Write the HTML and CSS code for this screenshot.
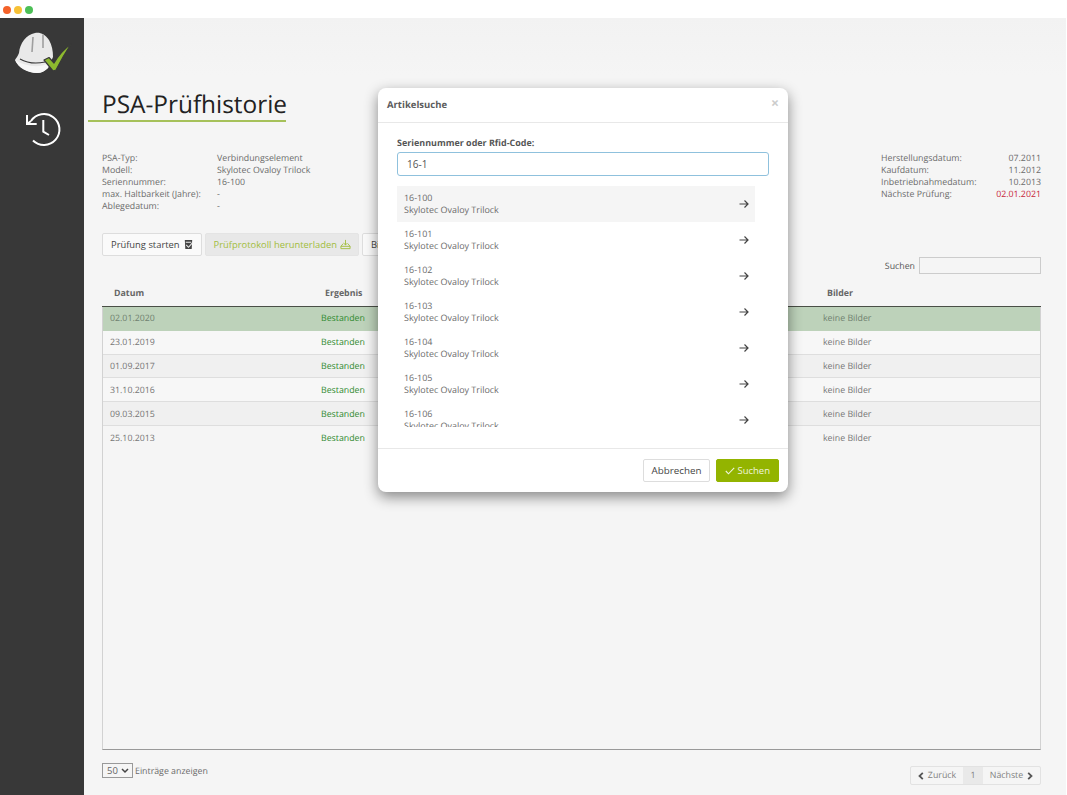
FILE: index.html
```html
<!DOCTYPE html>
<html lang="de">
<head>
<meta charset="utf-8">
<title>PSA-Prüfhistorie</title>
<link rel="stylesheet" href="styles.css">
</head>
<body>
<div class="titlebar">
  <span class="dot dot-red"></span><span class="dot dot-yellow"></span><span class="dot dot-green"></span>
</div>
<div class="app">
  <aside class="sidebar">
    <svg class="logo" viewBox="0 0 60 44" width="60" height="44" aria-hidden="true">
      <path d="M3 29 C4 27 6 25 7 22 C8 12 14 4 23 2 C28 1 33 3 37 9 C40 14 41 20 41 26 L36 37 C33 40 29 42 25 42 C16 42 6 37 3 29 Z" fill="#e9e9e9"/>
      <path d="M3 29 C6 36 16 42 25 42 C29 42 33 40 36 37 L38 32 C28 37 14 36 3 29 Z" fill="#f7f7f7"/>
      <path d="M8 28 C15 32 24 33 33 31" fill="none" stroke="#383838" stroke-width="1.100"/>
      <path d="M21 6 L20 21 M31 3.500 L31 17" fill="none" stroke="#9f9f9f" stroke-width="1.600"/>
      <path d="M32 29 L37 26.500 L42 32 C46 25 52 18 59 13 C53 22 48 31 44 39 L41 40 Z" fill="#8db92e" stroke="#383838" stroke-width="1.200" stroke-linejoin="round"/>
    </svg>
    <svg class="history" viewBox="0 0 40 40" width="40" height="40" aria-hidden="true">
      <path d="M9 11 A15.500 15.500 0 1 1 11 30.500" fill="none" stroke="#fff" stroke-width="2"/>
      <path d="M14.700 14 H5 V5 M5 14 L9 11" fill="none" stroke="#fff" stroke-width="2"/>
      <path d="M21.300 10 V21.700 L27 25" fill="none" stroke="#fff" stroke-width="2"/>
    </svg>
  </aside>
  <main class="content">
    <div class="band"></div>
    <h1 class="title">PSA-Prüfhistorie</h1>
    <section class="info">
      <dl class="facts facts-left">
        <dt>PSA-Typ:</dt><dd>Verbindungselement</dd>
        <dt>Modell:</dt><dd>Skylotec Ovaloy Trilock</dd>
        <dt>Seriennummer:</dt><dd>16-100</dd>
        <dt>max. Haltbarkeit (Jahre):</dt><dd>-</dd>
        <dt>Ablegedatum:</dt><dd>-</dd>
      </dl>
      <dl class="facts facts-right">
        <dt>Herstellungsdatum:</dt><dd>07.2011</dd>
        <dt>Kaufdatum:</dt><dd>11.2012</dd>
        <dt>Inbetriebnahmedatum:</dt><dd>10.2013</dd>
        <dt>Nächste Prüfung:</dt><dd class="due">02.01.2021</dd>
      </dl>
    </section>
    <div class="actions">
      <button class="btn btn-start" type="button">Prüfung starten
        <svg class="glyph" viewBox="0 0 12 12" width="11" height="11" aria-hidden="true"><path d="M2 1 H10 L9.500 11 H2.500 Z" fill="#444"/><path d="M3 3.500 H9 M3.500 6.500 L6 9 L10.500 4" fill="none" stroke="#eee" stroke-width="1.100"/></svg>
      </button>
      <button class="btn btn-active" type="button">Prüfprotokoll herunterladen
        <svg class="glyph" viewBox="0 0 12 12" width="11" height="11" aria-hidden="true"><path d="M6 1 V6.500 M4 4.500 L6 6.500 L8 4.500 M3.500 5 L1 8 V10.500 H11 V8 L8.500 5 M1 8 H11" fill="none" stroke="#a2bd40" stroke-width="1"/></svg>
      </button>
      <button class="btn" type="button">Bilder</button>
    </div>
    <div class="search">
      <label class="search-label" for="tablesearch">Suchen</label>
      <input class="search-input" id="tablesearch" type="text">
    </div>
    <div class="head-row">
      <span>Datum</span><span>Ergebnis</span><span>Bilder</span>
    </div>
    <div class="frame">
      <div class="row row-selected"><span>02.01.2020</span><span class="ok">Bestanden</span><span>keine Bilder</span></div>
      <div class="row"><span>23.01.2019</span><span class="ok">Bestanden</span><span>keine Bilder</span></div>
      <div class="row"><span>01.09.2017</span><span class="ok">Bestanden</span><span>keine Bilder</span></div>
      <div class="row"><span>31.10.2016</span><span class="ok">Bestanden</span><span>keine Bilder</span></div>
      <div class="row"><span>09.03.2015</span><span class="ok">Bestanden</span><span>keine Bilder</span></div>
      <div class="row"><span>25.10.2013</span><span class="ok">Bestanden</span><span>keine Bilder</span></div>
    </div>
    <footer class="table-foot">
      <div class="length">
        <select class="length-select"><option>50</option></select>
        <span>Einträge anzeigen</span>
      </div>
      <nav class="pager">
        <span class="page-link page-prev"><svg class="chev" viewBox="0 0 6 8" width="6" height="8" aria-hidden="true"><path d="M4.800 .8 L1.500 4 L4.800 7.200" fill="none" stroke="#555" stroke-width="1.800"/></svg>Zurück</span>
        <span class="page-link page-current">1</span>
        <span class="page-link page-next">Nächste<svg class="chev" viewBox="0 0 6 8" width="6" height="8" aria-hidden="true"><path d="M1.200 .8 L4.500 4 L1.200 7.200" fill="none" stroke="#555" stroke-width="1.800"/></svg></span>
      </nav>
    </footer>
  </main>
</div>

<div class="modal">
  <header class="modal-head">
    <h2 class="modal-title">Artikelsuche</h2>
    <span class="modal-close">×</span>
  </header>
  <div class="modal-body">
    <label class="field-label" for="serial">Seriennummer oder Rfid-Code:</label>
    <input class="field-input" id="serial" type="text" value="16-1">
    <ul class="results">
      <li class="result result-hover"><div>16-100<br>Skylotec Ovaloy Trilock</div><svg class="arrow" viewBox="0 0 10 10" width="10" height="10" aria-hidden="true"><path d="M.5 5 H9 M5.500 1.500 L9 5 L5.500 8.500" fill="none" stroke="#444" stroke-width="1.200"/></svg></li>
      <li class="result"><div>16-101<br>Skylotec Ovaloy Trilock</div><svg class="arrow" viewBox="0 0 10 10" width="10" height="10" aria-hidden="true"><path d="M.5 5 H9 M5.500 1.500 L9 5 L5.500 8.500" fill="none" stroke="#444" stroke-width="1.200"/></svg></li>
      <li class="result"><div>16-102<br>Skylotec Ovaloy Trilock</div><svg class="arrow" viewBox="0 0 10 10" width="10" height="10" aria-hidden="true"><path d="M.5 5 H9 M5.500 1.500 L9 5 L5.500 8.500" fill="none" stroke="#444" stroke-width="1.200"/></svg></li>
      <li class="result"><div>16-103<br>Skylotec Ovaloy Trilock</div><svg class="arrow" viewBox="0 0 10 10" width="10" height="10" aria-hidden="true"><path d="M.5 5 H9 M5.500 1.500 L9 5 L5.500 8.500" fill="none" stroke="#444" stroke-width="1.200"/></svg></li>
      <li class="result"><div>16-104<br>Skylotec Ovaloy Trilock</div><svg class="arrow" viewBox="0 0 10 10" width="10" height="10" aria-hidden="true"><path d="M.5 5 H9 M5.500 1.500 L9 5 L5.500 8.500" fill="none" stroke="#444" stroke-width="1.200"/></svg></li>
      <li class="result"><div>16-105<br>Skylotec Ovaloy Trilock</div><svg class="arrow" viewBox="0 0 10 10" width="10" height="10" aria-hidden="true"><path d="M.5 5 H9 M5.500 1.500 L9 5 L5.500 8.500" fill="none" stroke="#444" stroke-width="1.200"/></svg></li>
      <li class="result"><div>16-106<br>Skylotec Ovaloy Trilock</div><svg class="arrow" viewBox="0 0 10 10" width="10" height="10" aria-hidden="true"><path d="M.5 5 H9 M5.500 1.500 L9 5 L5.500 8.500" fill="none" stroke="#444" stroke-width="1.200"/></svg></li>
    </ul>
  </div>
  <footer class="modal-foot">
    <button class="btn btn-cancel" type="button">Abbrechen</button>
    <button class="btn btn-primary" type="button"><svg class="glyph" viewBox="0 0 10 8" width="10" height="8" aria-hidden="true"><path d="M.8 4 L3.500 6.800 L9.200 .8" fill="none" stroke="#f0f5dd" stroke-width="1.100"/></svg>Suchen</button>
  </footer>
</div>
</body>
</html>
```

FILE: styles.css
```css
* { box-sizing: border-box; }
html, body { height: 100%; }
body {
  margin: 0;
  height: 795px;
  overflow: hidden;
  display: flex;
  flex-direction: column;
  background: #f5f5f5;
  color: #6b6b6b;
  font-family: "Open Sans", "Noto Sans", sans-serif;
  font-size: 8.800px;
  line-height: 12px;
  text-rendering: geometricPrecision;
}
.titlebar {
  height: 18px;
  flex: none;
  display: flex;
  align-items: center;
  gap: 3px;
  padding: 2px 3px 0;
  background: #fff;
}
.dot { width: 8px; height: 8px; border-radius: 50%; }
.dot-red { background: #f4622a; }
.dot-yellow { background: #f7c136; }
.dot-green { background: #4cbf56; }
.app { flex: 1; display: flex; min-height: 0; }
.sidebar {
  width: 84px;
  flex: none;
  background: #383838;
  display: flex;
  flex-direction: column;
  align-items: center;
  padding-top: 13px;
}
.logo { display: block; }
.history { display: block; margin-top: 35px; }
.content {
  flex: 1;
  min-width: 0;
  display: flex;
  flex-direction: column;
  padding: 0 25px 0 18px;
  border-right: 1px solid #fff;
}
.band {
  height: 58px;
  flex: none;
  margin: 0 -25px 0 -18px;
  background: linear-gradient(#f2f2f2, #f5f5f5);
}
.title {
  margin: 12px 0 0 -14px;
  width: 198px;
  padding: 0 0 0 14px;
  height: 34px;
  border-bottom: 2px solid #a6c15a;
  color: #222;
  font-size: 24.400px;
  font-weight: 400;
  line-height: 33px;
  white-space: nowrap;
}
.info {
  display: flex;
  justify-content: space-between;
  margin-top: 30px;
  height: 62px;
}
.facts { margin: 0; display: grid; }
.facts dd { margin: 0; }
.facts dt { font-weight: 400; }
.facts-left { grid-template-columns: 115px 200px; grid-auto-rows: 12px; }
.facts-right { grid-template-columns: 110px 50px; grid-auto-rows: 12px; }
.facts-right dd { text-align: right; }
.due { color: #c8283c; }
.actions { display: flex; gap: 3px; margin-top: 19px; }
.btn {
  height: 23px;
  padding: 0 8px;
  border: 1px solid #ddd;
  border-radius: 2px;
  background: #fafafa;
  color: #444;
  font: inherit;
  font-size: 9.400px;
  white-space: nowrap;
  display: inline-flex;
  align-items: center;
  gap: 3px;
}
.btn-start { padding-right: 7px; }
.btn-active {
  background: #e8e8e8;
  color: #a2bd40;
  border-color: #e4e4e4;
  padding-right: 7px;
}
.glyph { display: block; flex: none; }
.search {
  display: flex;
  justify-content: flex-end;
  align-items: center;
  gap: 4px;
  margin-top: 1px;
  height: 17px;
}
.search-label { color: #555; }
.search-input {
  width: 122px;
  height: 17px;
  border: 1px solid #ccc;
  background: #f5f5f5;
  padding: 0 4px;
}
.head-row {
  display: grid;
  grid-template-columns: 211px 1fr 226px;
  align-items: center;
  height: 24px;
  margin-top: 9px;
  padding-bottom: 3px;
  border-bottom: 1px solid #4a4f46;
  font-weight: 700;
  color: #666;
}
.head-row span { padding-left: 12px; }
.frame {
  height: 443px;
  flex: none;
  border-left: 1px solid #d2d2d2;
  border-right: 1px solid #d2d2d2;
  border-bottom: 1px solid #999;
}
.row {
  display: grid;
  grid-template-columns: 211px 1fr 224px;
  align-items: center;
  height: 23.800px;
  border-bottom: 1px solid #dedede;
  background: #f7f7f7;
  color: #757575;
}
.row span { padding-left: 7px; }
.row:nth-child(odd) { background: #f0f0f0; }
.row:last-child { border-bottom: 0; background: transparent; }
.row.row-selected { background: #bdd2ba; border-bottom-color: #bdd2ba; color: #6f816f; }
.row .ok { color: #2f8a2f; }
.table-foot {
  display: flex;
  justify-content: space-between;
  align-items: flex-start;
  margin-top: 13px;
}
.length { display: flex; align-items: center; gap: 2px; }
.length-select {
  appearance: none;
  width: 31px;
  height: 15px;
  font: inherit;
  font-size: 9.500px;
  color: #666;
  padding: 0 0 0 4px;
  border: 1px solid #999;
  border-radius: 0;
  background: #f5f5f5 url("data:image/svg+xml,%3Csvg xmlns='http://www.w3.org/2000/svg' width='8' height='6'%3E%3Cpath d='M1 1 L4 4 L7 1' fill='none' stroke='%23444' stroke-width='1.500'/%3E%3C/svg%3E") no-repeat right 3px center;
}
.pager {
  display: flex;
  height: 19px;
  margin-top: 3px;
  border: 1px solid #e2e2e2;
  border-radius: 2px;
}
.page-link {
  color: #808080;
  display: flex;
  align-items: center;
  justify-content: center;
  gap: 4px;
  line-height: 17px;
}
.page-prev { width: 52px; }
.page-current { width: 20px; background: #e9e9e9; }
.page-next { width: 57px; }
.chev { display: block; flex: none; }
.modal {
  position: absolute;
  left: 378px;
  top: 88px;
  width: 410px;
  height: 404px;
  display: flex;
  flex-direction: column;
  background: #fff;
  border-radius: 8px;
  box-shadow: 0 5px 14px rgba(0, 0, 0, .45);
  font-size: 8.950px;
}
.modal-head {
  height: 35px;
  flex: none;
  display: flex;
  align-items: center;
  justify-content: space-between;
  padding: 0 9px;
  border-bottom: 1px solid #e8e8e8;
}
.modal-title { margin: 0; font-size: 9.500px; font-weight: 700; color: #5c5c5c; }
.modal-close { font-size: 14px; font-weight: 700; color: #ccc; margin-bottom: 2px; }
.modal-body {
  flex: 1;
  min-height: 0;
  display: flex;
  flex-direction: column;
  padding: 14px 19px 21px;
}
.field-label { font-weight: 700; color: #555; }
.field-input {
  display: block;
  width: 100%;
  height: 24px;
  margin-top: 3px;
  padding: 0 9px;
  border: 1px solid #8fc1dd;
  border-radius: 3px;
  color: #555;
  font: inherit;
  font-size: 10px;
  outline: 0;
}
.results {
  list-style: none;
  margin: 10px 0 0;
  padding: 0;
  width: 358px;
  flex: 1;
  min-height: 0;
  overflow: hidden;
}
.result {
  height: 36px;
  display: flex;
  align-items: center;
  justify-content: space-between;
  padding: 0 6px 0 7px;
}
.result-hover { background: #f5f5f5; }
.arrow { display: block; flex: none; }
.modal-foot {
  height: 44px;
  flex: none;
  display: flex;
  justify-content: flex-end;
  align-items: center;
  gap: 6px;
  padding: 0 9px;
  border-top: 1px solid #e8e8e8;
}
.btn-cancel { background: #fff; font-size: 9.800px; }
.btn-primary {
  background: #93b400;
  border-color: #93b400;
  color: #f0f5dd;
  font-size: 9.500px;
  gap: 2px;
}
```
